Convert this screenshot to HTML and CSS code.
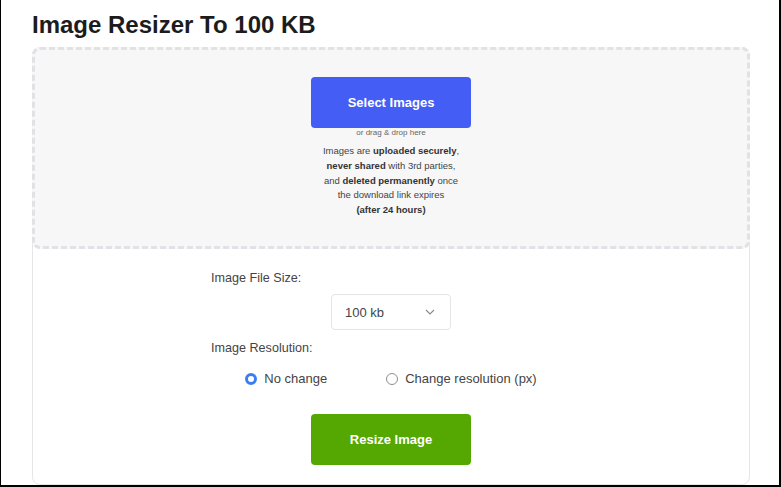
FILE: index.html
```html
<!DOCTYPE html>
<html>
<head>
<meta charset="utf-8">
<link rel="stylesheet" href="styles.css">
</head>
<body>
<div class="frame">
  <h1 class="title">Image Resizer To 100 KB</h1>
  <div class="card">
    <div class="dropzone">
      <button class="btn btn-select">Select Images</button>
      <div class="hint">or drag &amp; drop here</div>
      <p class="note">Images are <b>uploaded securely</b>,<br><b>never shared</b> with 3rd parties,<br>and <b>deleted permanently</b> once<br>the download link expires<br><b>(after 24 hours)</b></p>
    </div>
    <div class="form">
      <div class="label">Image File Size:</div>
      <div class="select-row">
        <div class="select">
          <span>100 kb</span>
          <svg class="chev" width="10" height="6" viewBox="0 0 10 6"><path d="M1 1l4 4 4-4" fill="none" stroke="#888" stroke-width="1.1"/></svg>
        </div>
      </div>
      <div class="label label-res">Image Resolution:</div>
      <div class="radios">
        <label class="radio"><span class="dot dot-on"></span>No change</label>
        <label class="radio"><span class="dot"></span>Change resolution (px)</label>
      </div>
      <div class="btn-row">
        <button class="btn btn-resize">Resize Image</button>
      </div>
    </div>
  </div>
</div>
</body>
</html>
```
FILE: styles.css
```css
html, body {
  margin: 0;
  padding: 0;
  background: #fff;
}
.frame {
  width: 781px;
  height: 487px;
  box-sizing: border-box;
  border-left: 1px solid #000;
  border-right: 2px solid #000;
  border-bottom: 2px solid #000;
  padding: 0 29px 0 31px;
  font-family: "Liberation Sans", Arial, sans-serif;
  overflow: hidden;
}
.title {
  margin: 0;
  padding: 11px 0 0 0;
  box-sizing: border-box;
  height: 47px;
  font-size: 24px;
  line-height: 28px;
  font-weight: bold;
  color: #1c1c1c;
}
.card {
  border: 1px solid #e6e6e6;
  border-radius: 8px;
  height: 438px;
  box-sizing: border-box;
}
.dropzone {
  margin: -1px -1px 0 -1px;
  height: 202px;
  box-sizing: border-box;
  border: 3px dashed #e1e1e6;
  border-radius: 8px;
  background: #f7f7f7;
  display: flex;
  flex-direction: column;
  align-items: center;
  padding-top: 27px;
}
.btn {
  border: 0;
  border-radius: 4px;
  width: 160px;
  height: 51px;
  color: #fff;
  font-family: "Liberation Sans", Arial, sans-serif;
  font-weight: bold;
  font-size: 13px;
  padding: 0;
}
.btn-select {
  background: #445df4;
}
.btn-resize {
  background: #55a801;
}
.hint {
  font-size: 8px;
  line-height: 10px;
  color: #666;
}
.note {
  margin: 6px 0 0;
  font-size: 9.5px;
  line-height: 14.8px;
  color: #444;
  text-align: center;
}
.note b {
  color: #333;
}
.form {
  width: 360px;
  margin: 0 auto;
  padding-top: 20px;
  color: #444;
  font-size: 13px;
}
.label {
  line-height: 18px;
  font-size: 12.6px;
}
.select-row {
  display: flex;
  justify-content: center;
  margin-top: 7px;
}
.select {
  width: 120px;
  height: 36px;
  box-sizing: border-box;
  border: 1px solid #e5e5e5;
  border-radius: 4px;
  display: flex;
  align-items: center;
  justify-content: space-between;
  padding: 0 15px 0 13px;
  color: #444;
}
.chev {
  display: block;
}
.label-res {
  margin-top: 9px;
}
.radios {
  display: flex;
  justify-content: center;
  gap: 59px;
  margin-top: 13px;
  line-height: 18px;
}
.radio {
  display: flex;
  align-items: center;
  gap: 7px;
}
.dot {
  width: 12px;
  height: 12px;
  box-sizing: border-box;
  border-radius: 50%;
  border: 1px solid #8e8e8e;
  background: #fff;
}
.dot-on {
  border: 3.5px solid #3a7ff2;
}
.btn-row {
  display: flex;
  justify-content: center;
  margin-top: 26px;
}
```
